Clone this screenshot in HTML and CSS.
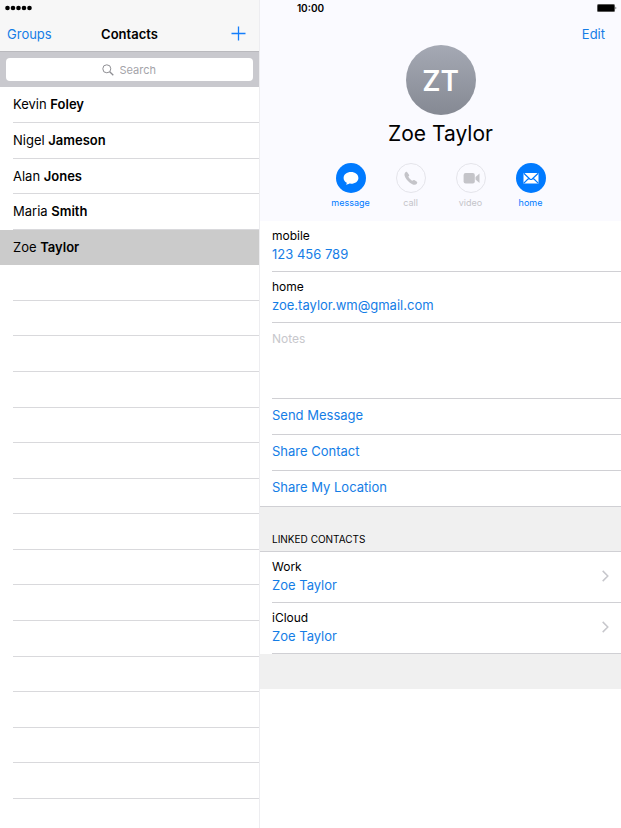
FILE: index.html
```
<!DOCTYPE html>
<html lang="en">
<head>
  <meta charset="UTF-8" />
  <meta name="viewport" content="width=device-width, initial-scale=1.0"/>
  <title>Contacts</title>
  <link rel="stylesheet" href="styles.css">
</head>
<body>
  <div class="status-bar">
    <svg class="signal" width="28" height="6" viewBox="0 0 28 6" fill="#000">
      <circle cx="3.5" cy="3" r="2.3"/><circle cx="9" cy="3" r="2.3"/><circle cx="14.500" cy="3" r="2.3"/><circle cx="20" cy="3" r="2.3"/><circle cx="25.500" cy="3" r="2.3"/>
    </svg>
    <span class="time">10:00</span>
    <svg class="battery" width="20" height="8" viewBox="0 0 20 8">
      <rect x="0" y="0" width="18" height="8" rx="1.5" fill="#555"/>
      <rect x="1" y="1" width="16" height="6" rx="0.5" fill="#000"/>
      <path d="M18.6 2.6 Q20 4 18.6 5.4Z" fill="#000"/>
    </svg>
  </div>

  <div class="app">
    <aside class="sidebar">
      <header class="nav">
        <button class="nav-btn" type="button">Groups</button>
        <h1>Contacts</h1>
        <button class="nav-btn add" type="button" aria-label="Add contact">
          <svg width="15" height="15" viewBox="0 0 15 15" stroke="#147efb" stroke-width="1.3"><path d="M7.5 0.5V14.5M0.5 7.5H14.5"/></svg>
        </button>
      </header>
      <div class="search">
        <label class="search-box">
          <svg width="12" height="12" viewBox="0 0 12 12" fill="none" stroke="#8e8e93" stroke-width="1"><circle cx="4.8" cy="4.8" r="4"/><path d="M7.7 7.7L11.3 11.3" stroke-width="1.3"/></svg>
          <input type="text" placeholder="Search" aria-label="Search">
        </label>
      </div>
      <ul class="contacts">
        <li><a href="#">Kevin <b>Foley</b></a></li>
        <li><a href="#">Nigel <b>Jameson</b></a></li>
        <li><a href="#">Alan <b>Jones</b></a></li>
        <li><a href="#">Maria <b>Smith</b></a></li>
        <li class="selected"><a href="#">Zoe <b>Taylor</b></a></li>
        <li></li>
        <li></li>
        <li></li>
        <li></li>
        <li></li>
        <li></li>
        <li></li>
        <li></li>
        <li></li>
        <li></li>
        <li></li>
        <li></li>
        <li></li>
        <li></li>
        <li></li>
      </ul>
    </aside>

    <main class="detail">
      <section class="card">
        <button class="nav-btn edit" type="button">Edit</button>
        <div class="avatar">ZT</div>
        <h2>Zoe Taylor</h2>
        <div class="actions">
          <button class="action" type="button">
            <svg width="30" height="30" viewBox="0 0 30 30">
              <circle cx="15" cy="15" r="15" fill="#007aff"/>
              <path d="M15 9C10.800 9 7.600 11.500 7.600 14.900C7.600 17 8.800 18.800 10.800 19.800C10.700 20.700 10.300 21.300 9.900 21.800C11.400 21.700 12.600 21.200 13.400 20.600C13.900 20.700 14.500 20.700 15 20.700C19.200 20.700 22.400 18.200 22.400 14.900C22.400 11.500 19.200 9 15 9Z" fill="#fff"/>
            </svg>
            message
          </button>
          <button class="action" type="button" disabled>
            <svg width="30" height="30" viewBox="0 0 30 30">
              <circle cx="15" cy="15" r="14.500" fill="none" stroke="#e4e4ea"/>
              <path d="M9.200 9.600C9.900 8.800 10.700 8.600 11.200 9.200L13 11.700C13.400 12.300 13.200 12.900 12.400 13.500C12.300 14.400 15.400 17.700 16.400 17.700C17.200 16.900 17.700 16.700 18.300 17.100L20.900 18.800C21.500 19.300 21.300 20.100 20.600 20.900C19.700 21.900 18.200 22.100 15.900 20.900C13.200 19.500 10.500 16.700 9.200 14.200C8.200 12.200 8.300 10.700 9.200 9.600Z" fill="#c4c4c9"/>
            </svg>
            call
          </button>
          <button class="action" type="button" disabled>
            <svg width="30" height="30" viewBox="0 0 30 30">
              <circle cx="15" cy="15" r="14.500" fill="none" stroke="#e4e4ea"/>
              <rect x="7.600" y="10" width="11.200" height="10.400" rx="2" fill="#c4c4c9"/>
              <path d="M19.500 14L23.500 10.500V20L19.500 16.500Z" fill="#c4c4c9"/>
            </svg>
            video
          </button>
          <button class="action" type="button">
            <svg width="30" height="30" viewBox="0 0 30 30">
              <circle cx="15" cy="15" r="15" fill="#007aff"/>
              <rect x="7.500" y="10" width="15" height="10.400" rx="0.500" fill="#fff"/>
              <path d="M7.800 10.300L13.800 16Q15 17 16.200 16L22.200 10.300M7.800 20.100L12.800 15.200M22.200 20.100L17.200 15.200" fill="none" stroke="#007aff" stroke-width="1.200"/>
            </svg>
            home
          </button>
        </div>
      </section>

      <dl class="fields">
        <div class="field">
          <dt>mobile</dt>
          <dd><a href="#">123 456 789</a></dd>
        </div>
        <div class="field">
          <dt>home</dt>
          <dd><a href="#">zoe.taylor.wm@gmail.com</a></dd>
        </div>
      </dl>
      <textarea class="notes" placeholder="Notes" aria-label="Notes"></textarea>
      <div class="links">
        <a href="#">Send Message</a>
        <a href="#">Share Contact</a>
        <a href="#">Share My Location</a>
      </div>

      <h3>LINKED CONTACTS</h3>
      <dl class="fields">
        <div class="field linked">
          <dt>Work</dt>
          <dd><a href="#">Zoe Taylor</a></dd>
          <svg width="7" height="12" viewBox="0 0 7 12" fill="none" stroke="#c7c7cc" stroke-width="1.500"><path d="M0.700 0.900L5.800 6L0.700 11.100"/></svg>
        </div>
        <div class="field linked">
          <dt>iCloud</dt>
          <dd><a href="#">Zoe Taylor</a></dd>
          <svg width="7" height="12" viewBox="0 0 7 12" fill="none" stroke="#c7c7cc" stroke-width="1.500"><path d="M0.700 0.900L5.800 6L0.700 11.100"/></svg>
        </div>
      </dl>
      <div class="footer"></div>
    </main>
  </div>
</body>
</html>
```
FILE: styles.css
```
* { margin: 0; padding: 0; box-sizing: border-box; }
body {
  font-family: Inter, "Liberation Sans", sans-serif;
  font-size: 13px;
  color: #000;
  background: #fff;
}
a { color: #147de6; text-decoration: none; }
button {
  font: inherit;
  color: #147de6;
  background: none;
  border: none;
  cursor: pointer;
}
svg { display: block; }

/* sits over both panes */
.status-bar {
  position: absolute;
  top: 0; left: 0; right: 0;
  height: 16px;
  padding: 0 4px;
  display: grid;
  grid-template-columns: 1fr auto 1fr;
  align-items: center;
}
.time { font-size: 10px; font-weight: 600; }
.battery { justify-self: end; }

.app { display: flex; min-height: 100vh; }

/* contact list */
.sidebar {
  flex: 0 0 260px;
  height: 100vh;
  overflow: hidden;
  border-right: 1px solid #ededf0;
}
.nav {
  display: grid;
  grid-template-columns: 1fr auto 1fr;
  align-items: center;
  height: 52px;
  padding: 16px 7px 0;
  background: #f7f7f7;
  border-bottom: 1px solid #b9b9bd;
}
.nav-btn { justify-self: start; line-height: 20px; }
.add { justify-self: end; padding-right: 6px; }
h1 { font-size: 13px; font-weight: 600; line-height: 20px; }
.search { padding: 6px; background: #c9c9ce; }
.search-box {
  display: flex;
  align-items: center;
  justify-content: center;
  gap: 6px;
  height: 23px;
  background: #fff;
  border-radius: 4px;
}
.search-box input {
  width: 38px;
  border: none;
  outline: none;
  background: none;
  font: inherit;
  font-size: 11px;
}
::placeholder { color: #a4a4a9; opacity: 1; }
.contacts { list-style: none; }
.contacts li {
  height: 36px;
  margin-left: 13px;
  border-bottom: 1px solid #d9d9dc;
}
.contacts li:nth-child(7n+3),
.contacts li:nth-child(7n+5),
.contacts li:nth-child(7n+7) { height: 35px; }
.contacts a { display: block; line-height: 35px; color: #000; }
.contacts b { font-weight: 600; }
.contacts .selected {
  margin-left: 0;
  padding-left: 13px;
  background: #cbcbcb;
  border-color: #cbcbcb;
}

/* contact card */
.detail { flex: 1; min-width: 0; }
.card {
  display: flex;
  flex-direction: column;
  align-items: center;
  height: 221px;
  padding-top: 24px;
  background: #fafaff;
}
.edit { align-self: flex-end; margin: 0 16px 1px 0; }
.avatar {
  width: 70px;
  height: 70px;
  border-radius: 50%;
  background: linear-gradient(#a5a9b4, #858993);
  color: #fff;
  font-size: 28px;
  font-weight: 600;
  line-height: 72px;
  text-align: center;
}
h2 { font-size: 21px; font-weight: 400; line-height: 38px; }
.actions { display: flex; margin-top: 10px; }
.action {
  display: flex;
  flex-direction: column;
  align-items: center;
  gap: 4px;
  width: 60px;
  color: #007aff;
  font-size: 9px;
  line-height: 12px;
}
.action:disabled { color: #c4c4c9; cursor: default; }

.field {
  display: grid;
  grid-template-columns: 1fr auto;
  align-items: center;
  align-content: start;
  margin-left: 12px;
  padding: 6px 12px 0 0;
  height: 51px;
  border-bottom: 1px solid #d0d0d4;
}
.field dt { font-size: 12px; line-height: 18px; }
.field dd { grid-row: 2; line-height: 18px; }
.linked svg { grid-column: 2; grid-row: 1 / 3; }
.notes {
  display: block;
  width: calc(100% - 12px);
  height: 76px;
  margin-left: 12px;
  padding-top: 8px;
  border: none;
  border-bottom: 1px solid #d0d0d4;
  outline: none;
  resize: none;
  font: inherit;
  font-size: 12px;
  line-height: 16px;
}
.notes::placeholder { color: #c7c7cc; }
.links a {
  display: block;
  height: 36px;
  margin-left: 12px;
  line-height: 33px;
  border-bottom: 1px solid #d0d0d4;
}
.links a:last-child { margin-left: 0; padding-left: 12px; }
h3 {
  padding: 24px 12px 4px;
  background: #f0f0f0;
  border-bottom: 1px solid #d0d0d4;
  font-size: 10px;
  font-weight: 400;
  line-height: 16px;
}
.footer { height: 35px; background: #f0f0f0; }
```
